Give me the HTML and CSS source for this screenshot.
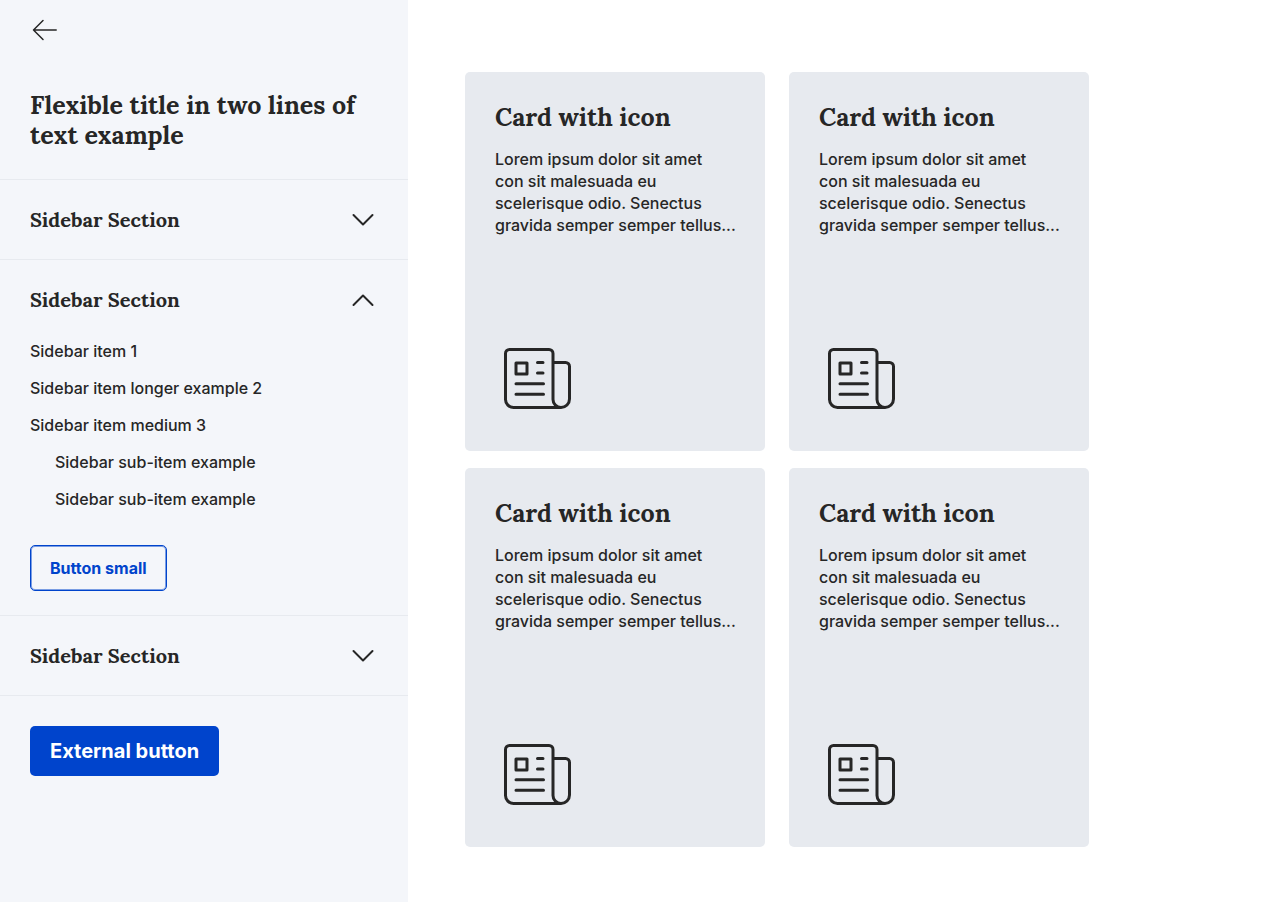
FILE: index.html
```html
<!DOCTYPE html>
<html lang="en">
<head>
<meta charset="utf-8">
<meta name="viewport" content="width=device-width, initial-scale=1">
<title>Sidebar and cards</title>
<link rel="stylesheet" href="styles.css">
</head>
<body>
<svg class="sprite" aria-hidden="true">
  <symbol id="chevron" viewBox="0 0 24 24"><path d="M2.500 7 12 16.500 21.500 7"/></symbol>
  <symbol id="newspaper" viewBox="0 0 84 84">
    <path d="M66 70.500H18.500a8 8 0 0 1-8-8V16.500a4 4 0 0 1 4-4H54a4 4 0 0 1 4 4V62.500a8 8 0 0 0 8 8A8.500 8.500 0 0 0 74.500 62V29.500a4 4 0 0 0-4-4H58"/>
    <path d="M21 26h11v11h-11zM42.500 25.500h5.500M42.500 36h5.500M21 46.700h27.500M21 57.300h27.500"/>
  </symbol>
</svg>
<div class="page">
  <aside class="sidebar">
    <header class="sidebar-header">
      <button class="back" type="button" aria-label="Back">
        <svg class="icon-back" viewBox="0 0 30 30"><path d="M13 5.500 3.500 15 13 24.500M3.500 15H26.200"/></svg>
      </button>
      <h1 class="title">Flexible title in two lines of text example</h1>
    </header>
    <section class="section">
      <button class="section-toggle" type="button" aria-expanded="false">Sidebar Section<svg class="chevron"><use href="#chevron"/></svg></button>
    </section>
    <section class="section">
      <button class="section-toggle" type="button" aria-expanded="true">Sidebar Section<svg class="chevron chevron-up"><use href="#chevron"/></svg></button>
      <div class="section-body">
        <ul class="items">
          <li><a class="item" href="#">Sidebar item 1</a></li>
          <li><a class="item" href="#">Sidebar item longer example 2</a></li>
          <li><a class="item" href="#">Sidebar item medium 3</a>
            <ul class="items sub-items">
              <li><a class="item" href="#">Sidebar sub-item example</a></li>
              <li><a class="item" href="#">Sidebar sub-item example</a></li>
            </ul>
          </li>
        </ul>
        <button class="button button-small" type="button">Button small</button>
      </div>
    </section>
    <section class="section">
      <button class="section-toggle" type="button" aria-expanded="false">Sidebar Section<svg class="chevron"><use href="#chevron"/></svg></button>
    </section>
    <div class="sidebar-footer">
      <button class="button button-primary" type="button">External button</button>
    </div>
  </aside>
  <main class="content">
    <article class="card">
      <h2 class="card-title">Card with icon</h2>
      <p class="card-text">Lorem ipsum dolor sit amet con&nbsp;sit malesuada eu scelerisque odio. Senectus gravida semper semper tellus...</p>
      <svg class="card-icon" aria-hidden="true"><use href="#newspaper"/></svg>
    </article>
    <article class="card">
      <h2 class="card-title">Card with icon</h2>
      <p class="card-text">Lorem ipsum dolor sit amet con&nbsp;sit malesuada eu scelerisque odio. Senectus gravida semper semper tellus...</p>
      <svg class="card-icon" aria-hidden="true"><use href="#newspaper"/></svg>
    </article>
    <article class="card">
      <h2 class="card-title">Card with icon</h2>
      <p class="card-text">Lorem ipsum dolor sit amet con&nbsp;sit malesuada eu scelerisque odio. Senectus gravida semper semper tellus...</p>
      <svg class="card-icon" aria-hidden="true"><use href="#newspaper"/></svg>
    </article>
    <article class="card">
      <h2 class="card-title">Card with icon</h2>
      <p class="card-text">Lorem ipsum dolor sit amet con&nbsp;sit malesuada eu scelerisque odio. Senectus gravida semper semper tellus...</p>
      <svg class="card-icon" aria-hidden="true"><use href="#newspaper"/></svg>
    </article>
  </main>
</div>
</body>
</html>
```
FILE: styles.css
```css
* { box-sizing: border-box; }

body {
  margin: 0;
  background: #fff;
  color: #262626;
  font: 500 16px/22px Inter, "Liberation Sans", sans-serif;
}

button {
  margin: 0;
  border: 0;
  background: none;
  color: inherit;
  font: inherit;
  cursor: pointer;
}

.sprite { display: none; }

.page {
  display: grid;
  grid-template-columns: 408px 1fr;
  min-height: 100vh;
}

.sidebar { background: #f4f6fa; }

.sidebar-header {
  display: flex;
  flex-direction: column;
  align-items: flex-start;
  gap: 45px;
  padding: 15px 30px 29px;
}

.back {
  display: flex;
  padding: 0;
}

.icon-back {
  width: 30px;
  height: 30px;
  fill: none;
  stroke: #262626;
  stroke-width: 1.5;
  stroke-linecap: round;
  stroke-linejoin: round;
}

.title,
.card-title,
.section-toggle {
  margin: 0;
  font-family: Lora, "Liberation Serif", serif;
  font-weight: 700;
}

.title,
.card-title {
  font-size: 25px;
  line-height: 30px;
}

.section { border-top: 1px solid #e7eaef; }

.section-toggle {
  display: flex;
  align-items: center;
  justify-content: space-between;
  width: 100%;
  height: 79px;
  padding: 0 33px 0 30px;
  font-size: 20px;
  line-height: 30px;
}

.chevron {
  width: 24px;
  height: 24px;
  fill: none;
  stroke: #262626;
  stroke-width: 2;
  stroke-linecap: round;
  stroke-linejoin: round;
}

.chevron-up { transform: rotate(180deg); }

.section-body { padding: 1px 30px 24px; }

.items {
  display: flex;
  flex-direction: column;
  gap: 15px;
  margin: 0;
  padding: 0;
  list-style: none;
}

.sub-items {
  margin-top: 15px;
  padding-left: 25px;
}

.item {
  display: block;
  color: inherit;
  text-decoration: none;
}

.button {
  border-radius: 5px;
  white-space: nowrap;
}

.button-small {
  height: 46px;
  margin-top: 35px;
  padding: 0 19px;
  border: 1px solid #0044cc;
  box-shadow: inset 0 0 0 1px rgba(0, 68, 204, 0.5);
  color: #0044cc;
  font-weight: 700;
}

.button-primary {
  height: 50px;
  padding: 0 20px;
  background: #0044cc;
  color: #fff;
  font-size: 20px;
  font-weight: 700;
}

.sidebar-footer {
  padding: 30px;
  border-top: 1px solid #e7eaef;
}

.content {
  display: grid;
  grid-template-columns: repeat(auto-fill, 300px);
  align-content: start;
  gap: 17px 24px;
  padding: 72px 0 55px 57px;
}

.card {
  display: flex;
  flex-direction: column;
  min-height: 379px;
  padding: 30px 28px 30px 30px;
  border-radius: 5px;
  background: #e7eaef;
}

.card-text { margin: 16px 0 0; }

.card-icon {
  width: 84px;
  height: 84px;
  margin-top: auto;
  fill: none;
  stroke: #262626;
  stroke-width: 3;
  stroke-linecap: round;
  stroke-linejoin: round;
}
```
